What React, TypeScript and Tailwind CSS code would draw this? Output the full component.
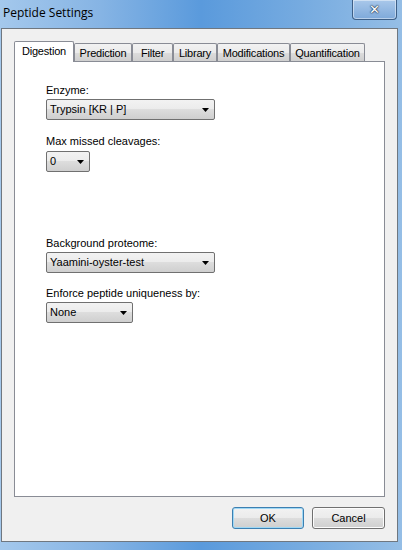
import React from "react";

function Arrow() {
  return (
    <svg width="7" height="4" viewBox="0 0 7 4" className="shrink-0">
      <path d="M0 0h7L3.5 4z" fill="#000" />
    </svg>
  );
}

function Combo({ value, width }: { value: string; width: string }) {
  return (
    <div
      className={`${width} h-[21px] flex items-center justify-between pl-[3px] pr-[5px] rounded-[2px] border border-[#707070] bg-[linear-gradient(#f2f2f2_0%,#ebebeb_50%,#dddddd_50%,#cfcfcf_100%)] text-[11px] text-black`}
    >
      <span>{value}</span>
      <Arrow />
    </div>
  );
}

function Button({ label, isDefault }: { label: string; isDefault?: boolean }) {
  return (
    <div
      className={`h-[22px] flex items-center justify-center rounded-[3px] border text-[11px] text-black bg-[linear-gradient(#f2f2f2_0%,#ebebeb_50%,#dddddd_50%,#cfcfcf_100%)] ${
        isDefault
          ? "w-[72px] border-[#3c7fb1] shadow-[inset_0_0_0_1px_#9fd8f5]"
          : "w-[73px] border-[#707070] shadow-[inset_0_0_0_1px_#fcfcfc]"
      }`}
    >
      {label}
    </div>
  );
}

const tabs = [
  { name: "Prediction", w: "w-[58px]" },
  { name: "Filter", w: "w-[41px]" },
  { name: "Library", w: "w-[44px]" },
  { name: "Modifications", w: "w-[73px]" },
  { name: "Quantification", w: "w-[75px]" },
];

export default function App() {
  return (
    <div
      className="w-[402px] h-[550px] flex flex-col overflow-hidden bg-[linear-gradient(90deg,#a4c8ec_0%,#86b4e4_25%,#5a9adc_50%,#76abe0_75%,#95bee6_100%)]"
      style={{ fontFamily: '"Liberation Sans", Arial, sans-serif' }}
    >
      {/* title bar */}
      <div className="h-[28px] flex items-start justify-between shrink-0">
        <div
          className="pl-[3px] pt-[5px] text-[12px] leading-[16px] text-black"
          style={{ fontFamily: '"Open Sans", "Liberation Sans", sans-serif' }}
        >
          Peptide Settings
        </div>
        <div className="mr-[5px] w-[45px] h-[20px] flex items-center justify-center rounded-b-[4px] border border-t-0 border-[#3d5f87] bg-[linear-gradient(#a9c8ea,#7ea9da)] shadow-[inset_0_0_0_1px_rgba(255,255,255,0.45)]">
          <span
            className="text-[13px] leading-[13px] font-bold text-white"
            style={{
              fontFamily: '"DejaVu Sans", sans-serif',
              textShadow: "0 0 1px #1f3550, 0 0 1px #1f3550, 0 0 2px #1f3550",
            }}
          >
            ✕
          </span>
        </div>
      </div>

      {/* client area */}
      <div className="flex-1 ml-[1px] mr-[4px] mb-[8px] border border-[#6f7780] bg-[#f0f0f0] flex flex-col p-[12px]">
        {/* tab strip */}
        <div className="flex items-end h-[20px] relative z-10 tracking-[-0.2px]">
          <div className="w-[60px] h-[21px] -mb-[1px] flex justify-center pt-[3px] border border-b-0 border-[#898c95] bg-white text-[11px] leading-[13px] text-black rounded-t-[2px]">
            Digestion
          </div>
          {tabs.map((t) => (
            <div
              key={t.name}
              className={`${t.w} h-[18px] flex justify-center pt-[3px] border border-b-0 border-[#898c95] bg-[linear-gradient(#f2f2f2_0%,#ebebeb_50%,#dddddd_50%,#cfcfcf_100%)] text-[11px] leading-[13px] text-black rounded-t-[2px]`}
            >
              {t.name}
            </div>
          ))}
        </div>

        {/* tab panel */}
        <div className="flex-1 border border-[#898c95] bg-white pl-[31px] pt-[22px] text-[11px] leading-[13px] text-black">
          <div>Enzyme:</div>
          <div className="mt-[2px]">
            <Combo value="Trypsin [KR | P]" width="w-[169px]" />
          </div>

          <div className="mt-[15px]">Max missed cleavages:</div>
          <div className="mt-[3px]">
            <Combo value="0" width="w-[44px]" />
          </div>

          <div className="mt-[65px]">Background proteome:</div>
          <div className="mt-[2px]">
            <Combo value="Yaamini-oyster-test" width="w-[169px]" />
          </div>

          <div className="mt-[14px]">Enforce peptide uniqueness by:</div>
          <div className="mt-[2px]">
            <Combo value="None" width="w-[87px]" />
          </div>
        </div>

        {/* buttons */}
        <div className="mt-[10px] flex justify-end gap-[8px]">
          <Button label="OK" isDefault />
          <Button label="Cancel" />
        </div>
      </div>
    </div>
  );
}
